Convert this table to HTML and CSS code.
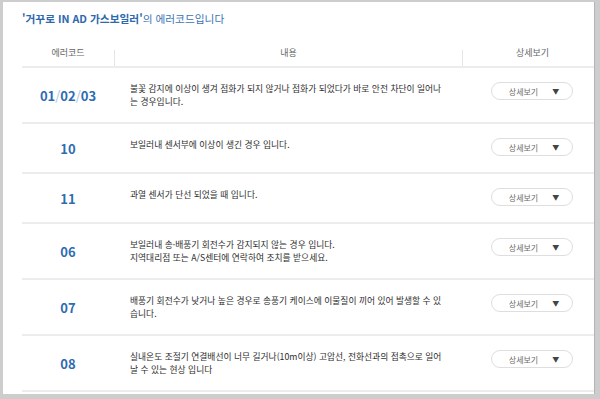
FILE: index.html
```html
<!DOCTYPE html>
<html lang="ko">
<head>
    <meta charset="UTF-8">
    <title>에러코드</title>
    <link rel="stylesheet" href="styles.css">
</head>
<body>
    <div class="frame">
        <h2 class="title"><strong>'거꾸로 IN AD 가스보일러'</strong>의 에러코드입니다</h2>

        <div class="error-table">
            <div class="thead">
                <div class="th"><span>에러코드</span></div>
                <div class="th"><span>내용</span></div>
                <div class="th"><span>상세보기</span></div>
            </div>

            <div class="tr">
                <div class="code">01<i>/</i>02<i>/</i>03</div>
                <div class="desc">불꽃 감지에 이상이 생겨 점화가 되지 않거나 점화가 되었다가 바로 안전 차단이 일어나<br>는 경우입니다.</div>
                <div class="more"><button class="more-btn">상세보기 <b>▼</b></button></div>
            </div>
            <div class="tr">
                <div class="code">10</div>
                <div class="desc">보일러내 센서부에 이상이 생긴 경우 입니다.</div>
                <div class="more"><button class="more-btn">상세보기 <b>▼</b></button></div>
            </div>
            <div class="tr">
                <div class="code">11</div>
                <div class="desc">과열 센서가 단선 되었을 때 입니다.</div>
                <div class="more"><button class="more-btn">상세보기 <b>▼</b></button></div>
            </div>
            <div class="tr">
                <div class="code">06</div>
                <div class="desc">보일러내 송·배풍기 회전수가 감지되지 않는 경우 입니다.<br>지역대리점 또는 A/S센터에 연락하여 조치를 받으세요.</div>
                <div class="more"><button class="more-btn">상세보기 <b>▼</b></button></div>
            </div>
            <div class="tr">
                <div class="code">07</div>
                <div class="desc">배풍기 회전수가 낮거나 높은 경우로 송풍기 케이스에 이물질이 끼어 있어 발생할 수 있<br>습니다.</div>
                <div class="more"><button class="more-btn">상세보기 <b>▼</b></button></div>
            </div>
            <div class="tr">
                <div class="code">08</div>
                <div class="desc">실내온도 조절기 연결배선이 너무 길거나(10m이상) 고압선, 전화선과의 접촉으로 일어<br>날 수 있는 현상 입니다</div>
                <div class="more"><button class="more-btn">상세보기 <b>▼</b></button></div>
            </div>
        </div>
    </div>
</body>
</html>
```

FILE: styles.css
```css
body {
    margin: 0;
    padding: 0;
    background-color: #cdcdcd;
    font-family: "Noto Sans CJK KR", "Noto Sans", sans-serif;
}

.frame {
    margin: 2px 5px 5px 3px;
    height: 392px;
    background-color: #fff;
    border-right: 1px solid #b4b4b4;
    box-sizing: border-box;
    padding: 9px 0 0 19px;
    overflow: hidden;
}

.title {
    margin: 0;
    font-size: 10.7px;
    line-height: 16px;
    font-weight: normal;
    color: #3a74b6;
}

.title strong {
    font-weight: bold;
    color: #2d68ad;
}

.error-table {
    width: 580px;
    margin-top: 15px;
}

.thead,
.tr {
    display: grid;
    grid-template-columns: 92px 348px 140px;
}

.thead {
    border-bottom: 2px solid #ececec;
    padding-top: 8px;
}

.th {
    height: 16px;
    text-align: center;
    font-size: 9px;
    color: #666;
}

.th span {
    display: block;
    margin-top: -4px;
    line-height: 14px;
}

.th + .th {
    border-left: 1px solid #e6e6e6;
}

.tr {
    border-bottom: 2px solid #ececec;
    padding: 14px 0;
}

.code {
    align-self: center;
    text-align: center;
    font-size: 13px;
    line-height: 18px;
    font-weight: bold;
    color: #2e6cb2;
    padding-top: 2px;
}

.code i {
    font-style: normal;
    font-weight: normal;
    color: #a9bed8;
}

.desc {
    padding: 0 14px 0 16px;
    font-size: 8.75px;
    line-height: 13px;
    color: #2e2e2e;
    white-space: nowrap;
}

.more {
    display: flex;
    justify-content: center;
    align-items: flex-start;
    height: 18px;
}

.more-btn {
    width: 82px;
    height: 18px;
    padding: 0 0 0 4px;
    border: 1px solid #dedede;
    border-radius: 9px;
    background: #fff;
    font-family: inherit;
    font-size: 8px;
    color: #6a6a6a;
    display: flex;
    align-items: center;
    justify-content: center;
    gap: 14px;
}

.more-btn b {
    font-size: 7px;
    color: #444;
}
```
